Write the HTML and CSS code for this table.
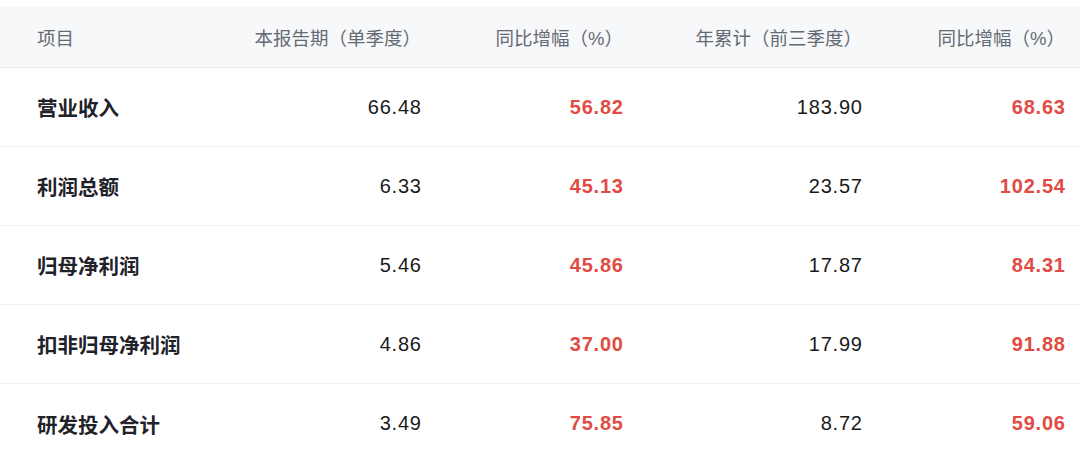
FILE: index.html
```html
<!DOCTYPE html>
<html lang="zh-CN">
<head>
<meta charset="utf-8">
<link rel="stylesheet" href="styles.css">
</head>
<body>
<div class="table">
  <div class="row head">
    <div class="cell label">项目</div>
    <div class="cell hnum">本报告期（单季度）</div>
    <div class="cell hnum">同比增幅（%）</div>
    <div class="cell hnum">年累计（前三季度）</div>
    <div class="cell hnum">同比增幅（%）</div>
  </div>
  <div class="row">
    <div class="cell label">营业收入</div>
    <div class="cell num">66.48</div>
    <div class="cell num up">56.82</div>
    <div class="cell num">183.90</div>
    <div class="cell num up">68.63</div>
  </div>
  <div class="row">
    <div class="cell label">利润总额</div>
    <div class="cell num">6.33</div>
    <div class="cell num up">45.13</div>
    <div class="cell num">23.57</div>
    <div class="cell num up">102.54</div>
  </div>
  <div class="row">
    <div class="cell label">归母净利润</div>
    <div class="cell num">5.46</div>
    <div class="cell num up">45.86</div>
    <div class="cell num">17.87</div>
    <div class="cell num up">84.31</div>
  </div>
  <div class="row">
    <div class="cell label">扣非归母净利润</div>
    <div class="cell num">4.86</div>
    <div class="cell num up">37.00</div>
    <div class="cell num">17.99</div>
    <div class="cell num up">91.88</div>
  </div>
  <div class="row last">
    <div class="cell label">研发投入合计</div>
    <div class="cell num">3.49</div>
    <div class="cell num up">75.85</div>
    <div class="cell num">8.72</div>
    <div class="cell num up">59.06</div>
  </div>
</div>
</body>
</html>
```
FILE: styles.css
```css
html, body {
  margin: 0;
  padding: 0;
  background: #ffffff;
}
body {
  padding-top: 7px;
  font-family: "Liberation Sans", "Noto Sans CJK SC", sans-serif;
  color: #1a1a1a;
}
.table {
  width: 1080px;
}
.row {
  display: grid;
  grid-template-columns: 200px 184px 202px 239px 203px;
  padding: 0 15px 0 37px;
  height: 79px;
  align-items: center;
  border-bottom: 1px solid #f0f1f3;
  box-sizing: border-box;
}
.row.last {
  border-bottom: none;
}
.row.head {
  height: 61px;
  background: #f7f8fa;
  border-bottom: 1px solid #e6e8eb;
}
.cell.label {
  font-size: 20.5px;
  font-weight: 700;
  color: #1f2329;
}
.cell.num {
  text-align: right;
  font-size: 20px;
  letter-spacing: 0.8px;
  margin-right: -0.8px;
}
.head .cell.label,
.cell.hnum {
  font-size: 18.5px;
  font-weight: 400;
  color: #646a73;
}
.cell.hnum {
  text-align: right;
}
.cell.up {
  color: #e24b43;
  font-weight: 700;
}
```
